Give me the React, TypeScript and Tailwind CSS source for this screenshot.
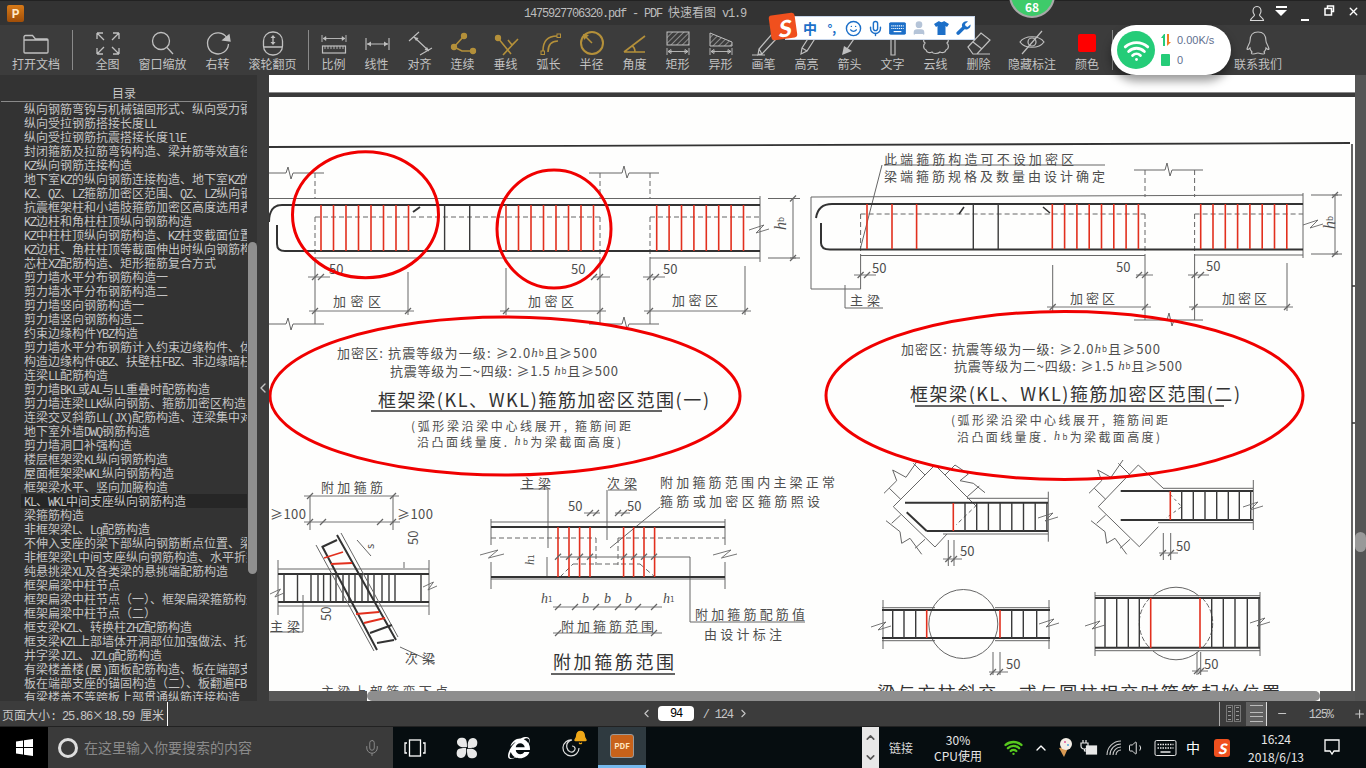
import { FC, ReactNode } from "react";
import { Bell, ChevronDown, ChevronLeft, ChevronRight, ChevronUp, Mic, Minus, Plus, Search, Smile, User, Volume1, Wifi, X } from "lucide-react";
import { FaInternetExplorer } from "react-icons/fa";

// latin runs squeezed to 6px per char, like the bitmap font of the app
const Mixed: FC<{ text: string }> = ({ text }) => (
  <>
    {text.split(/([\x20-\x7e]+)/).map((part, i) =>
      i % 2 ? (
        <span key={i} className="font-['Liberation_Mono'] text-[12px] tracking-[-1.2px] whitespace-pre">
          {part}
        </span>
      ) : (
        part
      ),
    )}
  </>
);

const toc = [
  "纵向钢筋弯钩与机械锚固形式、纵向受力钢筋",
  "纵向受拉钢筋搭接长度LL",
  "纵向受拉钢筋抗震搭接长度llE",
  "封闭箍筋及拉筋弯钩构造、梁并筋等效直径",
  "KZ纵向钢筋连接构造",
  "地下室KZ的纵向钢筋连接构造、地下室KZ的",
  "KZ、QZ、LZ箍筋加密区范围、QZ、LZ纵向钢筋",
  "抗震框架柱和小墙肢箍筋加密区高度选用表",
  "KZ边柱和角柱柱顶纵向钢筋构造",
  "KZ中柱柱顶纵向钢筋构造、KZ柱变截面位置",
  "KZ边柱、角柱柱顶等截面伸出时纵向钢筋构造",
  "芯柱XZ配筋构造、矩形箍筋复合方式",
  "剪力墙水平分布钢筋构造一",
  "剪力墙水平分布钢筋构造二",
  "剪力墙竖向钢筋构造一",
  "剪力墙竖向钢筋构造二",
  "约束边缘构件YBZ构造",
  "剪力墙水平分布钢筋计入约束边缘构件、体积",
  "构造边缘构件GBZ、扶壁柱FBZ、非边缘暗柱",
  "连梁LL配筋构造",
  "剪力墙BKL或AL与LL重叠时配筋构造",
  "剪力墙连梁LLK纵向钢筋、箍筋加密区构造",
  "连梁交叉斜筋LL(JX)配筋构造、连梁集中对角",
  "地下室外墙DWQ钢筋构造",
  "剪力墙洞口补强构造",
  "楼层框架梁KL纵向钢筋构造",
  "屋面框架梁WKL纵向钢筋构造",
  "框架梁水平、竖向加腋构造",
  "KL、WKL中间支座纵向钢筋构造",
  "梁箍筋构造",
  "非框架梁L、Lg配筋构造",
  "不伸入支座的梁下部纵向钢筋断点位置、梁",
  "非框架梁L中间支座纵向钢筋构造、水平折梁",
  "纯悬挑梁XL及各类梁的悬挑端配筋构造",
  "框架扁梁中柱节点",
  "框架扁梁中柱节点（一）、框架扁梁箍筋构造",
  "框架扁梁中柱节点（二）",
  "框支梁KZL、转换柱ZHZ配筋构造",
  "框支梁KZL上部墙体开洞部位加强做法、托柱",
  "井字梁JZL、JZLg配筋构造",
  "有梁楼盖楼(屋)面板配筋构造、板在端部支座",
  "板在端部支座的锚固构造（二）、板翻遍FB构造",
  "有梁楼盖不等跨板上部贯通纵筋连接构造",
];

const GOLD = "#b4903a";

const Ico: FC<{ children: ReactNode; color?: string }> = ({ children, color = "#c0c0c0" }) => (
  <svg width="36" height="30" viewBox="0 0 36 30" fill="none" stroke={color} strokeWidth="1.300" className="shrink-0">
    {children}
  </svg>
);

const hatch = (
  <defs>
    <pattern id="tool-hatch" width="4" height="4" patternUnits="userSpaceOnUse" patternTransform="rotate(45)">
      <line x1="0" y1="0" x2="0" y2="4" stroke="#c0c0c0" strokeWidth="1.200" />
    </pattern>
  </defs>
);

const dimH = <path d="M7 21v7M29 21v7M8 24.500h20M8 24.500l3-2v4zM28 24.500l-3-2v4z" strokeWidth="0.900" />;

const tools: { label: string; w: string; icon: ReactNode; gap?: string }[] = [
  { label: "全图", w: "w-[55px]", gap: "ml-[7px]", icon: <Ico><path d="M7 6l7 7M7 6h6M7 6v6M29 6l-7 7M29 6h-6M29 6v6M7 27l7-7M7 27h6M7 27v-6M29 27l-7-7M29 27h-6M29 27v-6" /></Ico> },
  { label: "窗口缩放", w: "w-[55px]", icon: <Ico><circle cx="16" cy="14" r="8.500" /><path d="M22 20.500l6 6.500" /></Ico> },
  { label: "右转", w: "w-[55px]", icon: <Ico><path d="M27 11A10.500 10.500 0 1 0 28.500 17" /><path d="M23 13l6-5 1 6z" fill="#c0c0c0" /></Ico> },
  { label: "滚轮翻页", w: "w-[55px]", icon: <Ico><rect x="8.500" y="5" width="19" height="23" rx="9" /><path d="M9 20h18M18 10v6" /><path d="M15.500 11l2.500-3 2.500 3zM15.500 15l2.500 3 2.500-3z" fill="#c0c0c0" stroke="none" /></Ico> },
  { label: "比例", w: "w-[43px]", gap: "ml-[3px]", icon: <Ico><path d="M6 8v7M30 8v7M7 11.500h22" strokeWidth="0.900" /><path d="M7 11.500l3-2v4zM29 11.500l-3-2v4z" fill="#c0c0c0" strokeWidth="0.500" /><rect x="6.500" y="19" width="23" height="7" strokeWidth="1.200" /><path d="M9 19v3M12 19v3M15 19v3M18 19v3M21 19v3M24 19v3M27 19v3" strokeWidth="0.900" /></Ico> },
  { label: "线性", w: "w-[43px]", icon: <Ico><path d="M7 11v12M30 11v12M8 17h21" strokeWidth="1.100" /><path d="M8 17l4-2.500v5zM29 17l-4-2.500v5z" fill="#c0c0c0" stroke="none" /></Ico> },
  { label: "对齐", w: "w-[43px]", icon: <Ico><path d="M7 14L17 5M18 28l12-7M12 10l15 14" strokeWidth="1.100" /><path d="M12 10l4.500 1-2.500 3zM27 24l-4.500-1 2.500-3z" fill="#c0c0c0" stroke="none" /></Ico> },
  { label: "连续", w: "w-[43px]", icon: <Ico color={GOLD}><path d="M19 9L9 20l8 4h11" strokeWidth="1.600" /><g fill={GOLD}><circle cx="19" cy="9" r="2.500" /><circle cx="9" cy="20" r="2.500" /><circle cx="28" cy="24" r="2.500" /></g></Ico> },
  { label: "垂线", w: "w-[43px]", icon: <Ico color={GOLD}><path d="M10 11l13 16M30 12L15 28M20 13l4 5 3-3" strokeWidth="1.600" /><circle cx="10" cy="11" r="2.500" fill={GOLD} /></Ico> },
  { label: "弧长", w: "w-[43px]", icon: <Ico color={GOLD}><path d="M12 24C12 14 17 9 26 9M17 25C17 18 20 14 27 14" strokeWidth="1.600" /><rect x="10" y="24" width="3.500" height="3.500" strokeWidth="1" /><rect x="26" y="7" width="3.500" height="3.500" strokeWidth="1" /></Ico> },
  { label: "半径", w: "w-[43px]", icon: <Ico color={GOLD}><circle cx="18" cy="16" r="11" strokeWidth="2" /><path d="M18 16l-7-7" strokeWidth="1.500" /><path d="M9 7l6 1-5 5z" fill={GOLD} stroke="none" /></Ico> },
  { label: "角度", w: "w-[43px]", icon: <Ico color={GOLD}><path d="M7 25L28 9M7 25h21M15 19c2 1 3 3 3 6" strokeWidth="1.600" /></Ico> },
  { label: "矩形", w: "w-[43px]", icon: <Ico>{hatch}<rect x="7" y="5" width="22" height="13" fill="url(#tool-hatch)" strokeWidth="1" />{dimH}</Ico> },
  { label: "异形", w: "w-[43px]", icon: <Ico><path d="M7 6L29 15V19H7Z" fill="url(#tool-hatch)" strokeWidth="1" />{dimH}</Ico> },
  { label: "画笔", w: "w-[43px]", icon: <Ico><path d="M6 28h13M14 27l-2 1 1-6L26 7l5 4-15 16zM13 22l3 5" strokeWidth="1.200" /></Ico> },
  { label: "高亮", w: "w-[43px]", icon: <Ico><path d="M12 27l1-6 9-14 5 3-9 14zM13 21l5 3" strokeWidth="1.200" /></Ico> },
  { label: "箭头", w: "w-[43px]", icon: <Ico><path d="M24 9L15 22" strokeWidth="1.300" /><path d="M10 28l2-9 8 5z" fill="#c0c0c0" stroke="none" /></Ico> },
  { label: "文字", w: "w-[43px]", icon: <Ico><path d="M7 12V7h22v5M16 7v21h4V7" strokeWidth="1.200" /></Ico> },
  { label: "云线", w: "w-[43px]", icon: <Ico><path d="M8 10c-3 1-3 5-1 6-2 2-2 6 1 7 1 3 4 3 6 2 1 2 6 2 8 0 2 1 5 1 6-2 3-1 3-5 1-7 2-2 2-5-1-6" strokeWidth="1.200" /></Ico> },
  { label: "删除", w: "w-[43px]", icon: <Ico><path d="M7 20L20 6l9 7-13 14h-4zM12 15l9 7M12 27h17" strokeWidth="1.200" /></Ico> },
  { label: "隐藏标注", w: "w-[64px]", icon: <Ico><path d="M6 15C11 8 25 8 30 15C25 22 11 22 6 15Z" strokeWidth="1.200" /><circle cx="18" cy="15" r="4" strokeWidth="1.200" /><path d="M8 27L28 4" strokeWidth="1.200" /></Ico> },
  { label: "颜色", w: "w-[46px]", icon: <Ico><rect x="9" y="7" width="18" height="18" rx="2" fill="#ff0000" stroke="none" /></Ico> },
];

const Tool: FC<{ label: string; w: string; icon: ReactNode; gap?: string }> = ({ label, w, icon, gap = "" }) => (
  <div className={`flex shrink-0 flex-col items-center pt-[2px] ${w} ${gap}`}>
    {icon}
    <span className="h-[14px] whitespace-nowrap text-[12px] leading-[14px] text-[#c2c2c2]">{label}</span>
  </div>
);

const TitleBar: FC = () => (
  <div className="flex h-[25px] shrink-0 items-center border-t border-[#222] bg-[#333]">
    <div className="ml-[7px] flex h-[17px] w-[17px] items-center justify-center rounded-[2px] bg-gradient-to-b from-[#d87a18] to-[#a04e08] text-[12px] font-bold leading-none text-[#ffe9c8]">
      P
    </div>
    <div className="ml-[500px] whitespace-nowrap text-[12px] text-[#bdbdbd]">
      <Mixed text="1475927706320.pdf - PDF 快速看图 v1.9" />
    </div>
    <div className="ml-auto mr-px flex text-white">
      <div className="flex w-[24px] justify-center">
        <svg width="16" height="17" viewBox="0 0 16 17" fill="none" stroke="#d8d8d8" strokeWidth="1.100">
          <path d="M8 1.500c-3 0-4 2.500-4 4.500 0 2 1 3 1.500 4C5.500 11.500 2 12.500 1.500 15.500h13C14 12.500 10.500 11.500 10.500 10 11 9 12 8 12 6c0-2-1-4.500-4-4.500z" />
        </svg>
      </div>
      <div className="flex w-[24px] flex-col items-center gap-[2px] pt-[1px]">
        <div className="h-[2px] w-[11px] bg-white" />
        <div className="h-0 w-0 border-x-[6px] border-t-[6px] border-x-transparent border-t-white" />
      </div>
      <div className="flex w-[24px] items-end justify-center pb-[1px]">
        <div className="h-[2px] w-[8px] bg-white" />
      </div>
      <div className="flex w-[24px] justify-center">
        <svg width="11" height="11" viewBox="0 0 11 11" fill="none" stroke="#fff" strokeWidth="1.500">
          <path d="M3.500 3V1h6v5.500H7.500M1 3.500h6.500V10H1z" />
        </svg>
      </div>
      <div className="flex w-[24px] justify-center">
        <X size={13} strokeWidth={2.500} />
      </div>
    </div>
  </div>
);

const Divider: FC<{ gap: string }> = ({ gap }) => <div className={`h-[40px] w-px shrink-0 self-center bg-[#8a8a8a] ${gap}`} />;

const Toolbar: FC = () => (
  <div className="flex h-[50px] shrink-0 bg-[#3c3c3c]">
    <Tool
      label="打开文档"
      w="w-[72px]"
      icon={
        <Ico>
          <path d="M6 10a1.500 1.500 0 0 1 1.500-1.500h7l3 3.500H29a1 1 0 0 1 1 1v12a1 1 0 0 1-1 1H7a1 1 0 0 1-1-1zM6 13h24" />
        </Ico>
      }
    />
    <Divider gap="" />
    {tools.slice(0, 4).map((t) => (
      <Tool key={t.label} {...t} />
    ))}
    <Divider gap="ml-[8px]" />
    {tools.slice(4).map((t) => (
      <Tool key={t.label} {...t} />
    ))}
    <Divider gap="ml-[2px]" />
    <Tool
      label="联系我们"
      w="w-[64px]"
      gap="ml-[113px]"
      icon={
        <Ico>
          <path d="M18 5c-6 0-8 4-8 9 0 2-2 4-3 8 1 1 2 0 3-1 0 2 1 3 2 4-1 1-1 2 1 2 3 0 4-1 5-1s2 1 5 1c2 0 2-1 1-2 1-1 2-2 2-4 1 1 2 2 3 1-1-4-3-6-3-8 0-5-2-9-8-9z" strokeWidth="1.100" />
        </Ico>
      }
    />
  </div>
);

const Sidebar: FC = () => (
  <div className="flex w-[257px] shrink-0 bg-[#333]">
    <div className="flex w-[248px] flex-col overflow-hidden">
      <div className="ml-px h-[27px] w-[246px] shrink-0 border-b border-[#8a8a8a] text-center text-[12px] leading-[36px] text-[#c6c6c6]">目录</div>
      {toc.map((line, i) => (
        <div
          key={i}
          className={`ml-[21px] h-[14px] w-[226px] shrink-0 overflow-hidden whitespace-nowrap pl-[3px] text-[12px] leading-[14px] text-[#c4c4c4] ${line.startsWith("KL、WKL") ? "bg-[#262626]" : ""}`}
        >
          <Mixed text={line} />
        </div>
      ))}
    </div>
    <div className="w-[9px]">
      <div className="mt-[167px] h-[332px] rounded-full bg-[#8f8f8f]" />
    </div>
  </div>
);

// ---- scanned drawing ----
const seq = (start: number, step: number, n: number) => Array.from({ length: n }, (_, i) => start + i * step);

const T: FC<{ x: number; y: number; w?: number; s?: number; children: ReactNode; rot?: boolean; c?: string }> = ({ x, y, w, s = 13, children, rot, c = "#4e4e4e" }) => (
  <text
    x={x}
    y={y}
    fontSize={s}
    fill={c}
    stroke="none"
    dominantBaseline="central"
    textLength={w}
    lengthAdjust={w ? "spacing" : undefined}
    transform={rot ? `rotate(-90 ${x} ${y})` : undefined}
  >
    {children}
  </text>
);

const Bars: FC<{ xs: number[]; y1: number; y2: number; red?: boolean }> = ({ xs, y1, y2, red }) => (
  <g stroke={red ? "#e2301e" : "#3a3a3a"} strokeWidth={red ? 1.600 : 1.400}>
    {xs.map((x) => (
      <line key={x} x1={x} x2={x} y1={y1} y2={y2} />
    ))}
  </g>
);

const Dim: FC<{ y: number; x1: number; x2: number; ticks: number[] }> = ({ y, x1, x2, ticks }) => (
  <g stroke="#666" strokeWidth="0.900">
    <line x1={x1} x2={x2} y1={y} y2={y} />
    {ticks.map((x) => (
      <line key={x} x1={x - 3} x2={x + 3} y1={y + 3} y2={y - 3} strokeWidth="1.300" />
    ))}
  </g>
);

const Zig: FC<{ x: number; y: number; w?: number }> = ({ x, y, w = 20 }) => (
  <path d={`M${x} ${y + 2}L${x + w * 0.75} ${y - 3}L${x + w * 0.35} ${y + 5}L${x + w} ${y + 1}`} stroke="#666" strokeWidth="0.900" fill="none" />
);

const Hb: FC<{ sub?: string }> = ({ sub = "b" }) => (
  <>
    <tspan fontStyle="italic" fontFamily="Liberation Serif">h</tspan>
    <tspan fontSize="8">{sub}</tspan>
  </>
);

// the two column stubs on the left sides of the skew beams
const stubsLeft = "M889.300 488.300L900.700 499.300M913.300 463.300L925 475M884 493.300L896.700 480.700L892.700 470L906 477.300L918 460M900.700 515L891.700 523.300M925 539.300L915 548.300M886 520.700L900 531.700L901.700 543.300L910 538.300L921.700 554.300";

const Drawing: FC = () => (
  <svg width="1086" height="604" viewBox="269 97 1086 604" className="block font-['Noto_Sans_CJK_SC',sans-serif]">
    <rect x="269" y="97" width="1086" height="604" fill="#fefefd" />
    <g fill="none" stroke="#666" strokeWidth="1">
      <path d="M269 147L1350 143" stroke="#333" strokeWidth="1.800" />
      <path d="M1352 144V701M1352 286H1355M1352 423H1355" stroke="#333" strokeWidth="1.500" />

      {/* beam one */}
      <path d="M269 198.500H760M315 258H600M650 258H760M760 196V262" />
      <path d="M269 173H286l2-6 3 12 2-6H324M269 324H286l2-6 3 12 2-6H324M589 173H622l2-7 3 12 2-5H659M589 324H622l2-7 3 12 2-5H659" />
      <path d="M315 258V324M600 258V324M650 258V324M408 272V315M506 268V315M745 266V315" />
      <path d="M315 173V198M600 173V198M650 173V198M315 217H600M650 217H760M315 217V258M600 217V258M650 217V258" strokeDasharray="5 3" />
      <path d="M269 222Q269 205 282 205H760M277 225V244Q277 251 285 251H760" stroke="#333" strokeWidth="2" />
      <path d="M413 212L420 207" stroke="#333" strokeWidth="2" />
      <Zig x={749} y={228} />
      <path d="M768 198.500H800M768 258H800M793 198V258" />
      <Dim y={198.500} x1={790} x2={796} ticks={[793]} />
      <Dim y={258} x1={790} x2={796} ticks={[793]} />
      <Bars xs={[444.600, 469.700]} y1={205} y2={251} />
      <Bars xs={seq(321, 12.500, 8)} y1={205} y2={251} red />
      <Bars xs={seq(506, 12.500, 8)} y1={205} y2={251} red />
      <Bars xs={seq(656.700, 12.400, 8)} y1={205} y2={251} red />
      <Dim y={277} x1={308} x2={330} ticks={[315, 321]} />
      <Dim y={277} x1={593} x2={610} ticks={[594, 600]} />
      <Dim y={277} x1={643} x2={665} ticks={[650, 656]} />
      <Dim y={311} x1={309} x2={414} ticks={[315, 408]} />
      <Dim y={311} x1={500} x2={606} ticks={[506, 600]} />
      <Dim y={311} x1={644} x2={751} ticks={[650, 745]} />

      {/* beam two */}
      <path d="M811 197L1303 195M811 197V289H860.600M860.600 255V289M860.600 255.500H1145M1194.600 255H1303M1303 193V258" />
      <path d="M1134 170H1165l2-7 3 13 2-6H1203M1134 320H1167l2-7 3 13 2-6H1203M1145 255V320M1194.600 255V320M1052.700 265V311M1287 263V311" />
      <path d="M884 165H1105M882 165L860 250M845 285V308H883" />
      <path d="M1145 170V197M1194.600 170V197M860.600 214H1145M1194.600 214H1303M860.600 214V255M1145 214V255M1194.600 214V255" strokeDasharray="5 3" />
      <path d="M816 218Q818 204 832 204H1303M821 223V243Q821 249.500 830 249.500H1303" stroke="#333" strokeWidth="2" />
      <path d="M959 214L964 207M1043 207L1050 213" stroke="#333" strokeWidth="1.600" />
      <Zig x={1303} y={223} />
      <path d="M1311 195H1342M1311 254H1342M1335 195V254" />
      <Dim y={195} x1={1332} x2={1338} ticks={[1335]} />
      <Dim y={254} x1={1332} x2={1338} ticks={[1335]} />
      <Bars xs={[973.300, 998.200]} y1={204} y2={249} />
      <Bars xs={[867, 892, 916.600]} y1={204} y2={249} red />
      <Bars xs={seq(1052.300, 12.300, 8)} y1={204} y2={249} red />
      <Bars xs={seq(1200.700, 12.300, 8)} y1={204} y2={249} red />
      <Dim y={275} x1={854} x2={876} ticks={[860.600, 867]} />
      <Dim y={275} x1={1136} x2={1153} ticks={[1139, 1145]} />
      <Dim y={275} x1={1188} x2={1209} ticks={[1194.600, 1201]} />
      <Dim y={307} x1={1047} x2={1151} ticks={[1052.700, 1145]} />
      <Dim y={307} x1={1189} x2={1293} ticks={[1194.600, 1287]} />

      {/* 附加箍筋 left */}
      <path d="M310 496V530M393 496V530M278 569H429M278 606H429M278 560V615M429 560V615M303 595V632H270M400 647L435 663" />
      <Dim y={496} x1={304} x2={399} ticks={[310, 393]} />
      <Dim y={522} x1={304} x2={400} ticks={[310, 323, 380, 393]} />
      <path d="M278 574H429M278 602H429" stroke="#333" strokeWidth="2" />
      <Bars xs={[284, 297.500, 311, 318, 323.600, 330.500, 336, 343, 349, 355, 362, 368, 374, 382, 389, 395, 421]} y1={574} y2={602} />
      <path d="M316 545L374 651M341 533L398 637" />
      <path d="M322 546L377 650M337 535L396 640M322 547L337 540M370 633L392 625M377 643L394 640" stroke="#333" strokeWidth="2" />
      <path d="M324 558L343 552M331 564L352 563M356 614L379 612M364 623L385 618" stroke="#e2301e" strokeWidth="1.800" />
      <Zig x={270} y={592} w={14} />
      <Zig x={423} y={585} w={14} />
      <path d="M357 540L371 556M404 562V568" />

      {/* 附加箍筋 middle */}
      <path d="M520 489H548V548M608 490H637M607 490V540M660 507L610 548M491 522H725M491 579H725M491 519V545M491 562V589M725 519V545M725 562V589M547 557V578M560 557H690V622H805" />
      <path d="M491 538H596M618 538H725M596 538V565M618 538V565M573 564H640M560 577L573 564M640 564L655 577" strokeDasharray="5 3" />
      <path d="M491 527H725M491 577H725" stroke="#333" strokeWidth="2" />
      <Zig x={480} y={553} w={24} />
      <Zig x={713} y={553} w={24} />
      <Bars xs={[558, 569, 579.600, 590, 623.600, 633.600, 644, 654.600]} y1={527} y2={577} red />
      <Dim y={513} x1={584} x2={600} ticks={[590, 596]} />
      <Dim y={513} x1={615} x2={630} ticks={[618, 624]} />
      <Dim y={556.700} x1={558} x2={558} ticks={[558, 569, 580, 590, 624, 634, 644, 654]} />
      <Dim y={607} x1={553} x2={662} ticks={[558, 575, 596, 618, 638, 654]} />
      <Dim y={633} x1={553} x2={662} ticks={[558, 654]} />

      {/* 斜交 */}
      <path d="M947 534L935 547L893.300 506.700L935 465L976.700 506.700M967 498.300H1048M943 534H1048M1048.300 491.700V541.700" />
      <path d="M976.700 505L956 525" strokeDasharray="4 3" />
      <path d={stubsLeft} />
      <path d="M945 475L955 465M967.300 496.700L979.300 486M955 465L968.300 474L960 480.700L973.300 483.300L985 492.700" />
      <path d="M905 502.700H1048M926.700 531H1048M906.700 512.300L926.700 531" stroke="#333" strokeWidth="2" />
      <Bars xs={seq(965, 11.700, 8)} y1={503} y2={531} />
      <Bars xs={[953.300]} y1={503} y2={531} red />
      <Zig x={1038} y={516} />
      <path d="M948.300 540V566M954 540V566" />
      <Dim y={559} x1={943} x2={962} ticks={[948.300, 954]} />

      <path d="M1163.300 488.300L1138.300 465L1098.300 506.700L1139.300 546.700L1158.300 526.700M1163 488.300H1253M1158 522.700H1253M1253.300 480V530" />
      <path d="M1166 490L1181.700 506.700L1166 518" strokeDasharray="3 3" />
      <g transform="translate(205 0)">
        <path d={stubsLeft} />
      </g>
      <path d="M1120.700 491H1253M1120.700 520H1253" stroke="#333" strokeWidth="2" />
      <Bars xs={[1181.700, 1193.300, 1205, 1216.700, 1228.300, 1239.300, 1250.700]} y1={491} y2={520} />
      <Bars xs={[1170.300]} y1={491} y2={520} red />
      <Zig x={1243} y={505} />
      <path d="M1163.300 533V560M1170.700 533V560" />
      <Dim y={553} x1={1159} x2={1178} ticks={[1163, 1171]} />

      {/* 圆柱 */}
      <circle cx="963.300" cy="624" r="34.500" />
      <path d="M882 607.700H935M995 607.700H1050M882 640.700H935M995 640.700H1050M883 600V649M1049 600V649" />
      <path d="M882 610H1050M882 638H1050" stroke="#333" strokeWidth="2" />
      <Bars xs={[892.700, 904, 915.700, 1011.700, 1023.300, 1036.700]} y1={610} y2={638} />
      <Bars xs={[926.700, 1000]} y1={610} y2={638} red />
      <Zig x={871} y={625} />
      <Zig x={1039} y={622} />
      <path d="M993 652V675M1000 652V675" />
      <Dim y={672} x1={989} x2={1008} ticks={[993, 1000]} />

      <path d="M1153 596A34.500 34.500 0 0 1 1199 596M1153 651A34.500 34.500 0 0 0 1199 651" />
      <path d="M1150 598A34.500 34.500 0 0 0 1150 648M1202 598A34.500 34.500 0 0 1 1202 648" strokeDasharray="5 2" />
      <path d="M1095 595.700H1260M1095 650.700H1260M1095 592V656M1260 592V656" />
      <path d="M1095 598H1260M1095 647.700H1260" stroke="#333" strokeWidth="2" />
      <Bars xs={[1105, 1116.700, 1128.300, 1139.300, 1211.700, 1223.300, 1235, 1247.300, 1259]} y1={598} y2={648} />
      <Bars xs={[1150.700, 1200]} y1={598} y2={648} red />
      <Zig x={1085} y={624} />
      <Zig x={1250} y={621} />
      <path d="M1197 652V675M1200.700 652V675" />
      <Dim y={671} x1={1192} x2={1208} ticks={[1197, 1201]} />
      <path d="M371 411H662M915 406H1224M551 674H675" stroke="#333" strokeWidth="1.500" />
    </g>

    {/* drawing labels */}
    <T x={329} y={268}>50</T>
    <T x={571} y={268}>50</T>
    <T x={663} y={268}>50</T>
    <T x={333} y={300} w={48}>加密区</T>
    <T x={528} y={300} w={46}>加密区</T>
    <T x={672} y={299} w={46}>加密区</T>
    <T x={337} y={352} w={260}>加密区: 抗震等级为一级: ≥2.0<Hb />且≥500</T>
    <T x={390} y={370} w={228}>抗震等级为二~四级: ≥1.5 <Hb />且≥500</T>
    <T x={378} y={399} w={331} s={18} c="#333">框架梁(KL、WKL)箍筋加密区范围(一)</T>
    <T x={411} y={425} w={220} s={12}>(弧形梁沿梁中心线展开, 箍筋间距</T>
    <T x={417} y={441} w={204} s={12}>沿凸面线量度. <Hb />为梁截面高度)</T>
    <T x={780} y={230} rot s={16}><Hb /></T>

    <T x={884} y={158} w={190}>此端箍筋构造可不设加密区</T>
    <T x={884} y={175} w={221}>梁端箍筋规格及数量由设计确定</T>
    <T x={850} y={299} w={30}>主梁</T>
    <T x={872} y={267}>50</T>
    <T x={1116} y={266}>50</T>
    <T x={1206} y={265}>50</T>
    <T x={1070} y={297} w={45}>加密区</T>
    <T x={1222} y={297} w={45}>加密区</T>
    <T x={901} y={348} w={259}>加密区: 抗震等级为一级: ≥2.0<Hb />且≥500</T>
    <T x={954} y={365} w={228}>抗震等级为二~四级: ≥1.5 <Hb />且≥500</T>
    <T x={910} y={393} w={330} s={18} c="#333">框架梁(KL、WKL)箍筋加密区范围(二)</T>
    <T x={951} y={419} w={217} s={12}>(弧形梁沿梁中心线展开, 箍筋间距</T>
    <T x={957} y={436} w={203} s={12}>沿凸面线量度. <Hb />为梁截面高度)</T>
    <T x={1329} y={229} rot s={16}><Hb /></T>

    <T x={321} y={486} w={62}>附加箍筋</T>
    <T x={270} y={513} w={36}>≥100</T>
    <T x={397} y={513} w={36}>≥100</T>
    <T x={412} y={545} rot>50</T>
    <T x={325} y={621} rot>50</T>
    <T x={369} y={549} rot s={11}>s</T>
    <T x={270} y={625} w={30}>主梁</T>
    <T x={405} y={657} w={30}>次梁</T>
    <T x={321} y={690} w={127}>主梁上部筋弯下点</T>

    <T x={521} y={482} w={30}>主梁</T>
    <T x={607} y={482} w={30}>次梁</T>
    <T x={660} y={481} w={175}>附加箍筋范围内主梁正常</T>
    <T x={660} y={500} w={160}>箍筋或加密区箍筋照设</T>
    <T x={568} y={505}>50</T>
    <T x={627} y={505}>50</T>
    <T x={530} y={565} rot s={12}><Hb sub="1" /></T>
    <T x={541} y={598} s={14}><Hb sub="1" /></T>
    <T x={582} y={598} s={14}><tspan fontStyle="italic" fontFamily="Liberation Serif">b</tspan></T>
    <T x={604} y={598} s={14}><tspan fontStyle="italic" fontFamily="Liberation Serif">b</tspan></T>
    <T x={625} y={598} s={14}><tspan fontStyle="italic" fontFamily="Liberation Serif">b</tspan></T>
    <T x={663} y={598} s={14}><Hb sub="1" /></T>
    <T x={561} y={625} w={93}>附加箍筋范围</T>
    <T x={695} y={613} w={110}>附加箍筋配筋值</T>
    <T x={704} y={633} w={78}>由设计标注</T>
    <T x={553} y={661} w={121} s={18} c="#333">附加箍筋范围</T>

    <T x={960} y={550}>50</T>
    <T x={1176} y={545}>50</T>
    <T x={1006} y={663}>50</T>
    <T x={1204} y={663}>50</T>
    <T x={877} y={692} w={403} s={18} c="#333">梁与方柱斜交，或与圆柱相交时箍筋起始位置</T>

    {/* hand marked red rings */}
    <g fill="none" stroke="#f00000" strokeWidth="3">
      <ellipse cx="365.500" cy="214.700" rx="73" ry="63" />
      <ellipse cx="554" cy="229" rx="57" ry="59" />
      <ellipse cx="505" cy="396" rx="235" ry="79" />
      <ellipse cx="1064.500" cy="395.500" rx="238.500" ry="84" />
    </g>
  </svg>
);

const PageArea: FC = () => (
  <div className="flex flex-1 flex-col overflow-hidden bg-[#3f3f3f]">
    <div className="h-[17px] shrink-0 bg-white" />
    <div className="h-[5px] shrink-0 border-t border-[#8a8a8a] bg-[#3a3a3a]" />
    <div className="relative flex-1">
      <Drawing />
      <div className="absolute inset-x-0 bottom-0 flex h-[10px]">
        <div className="w-[98px] bg-[#585858]" />
        <div className="flex-1 rounded-l-full rounded-r-full bg-[#8e8e8e]" />
        <div className="w-[35px] bg-[#585858]" />
      </div>
    </div>
  </div>
);

const StatusBar: FC = () => (
  <div className="flex h-[26px] shrink-0 items-center border-b border-[#222] bg-[#3c3c3c] text-[12px] text-[#c6c6c6]">
    <div className="ml-[2px] h-[24px] w-[166px] shrink-0 whitespace-nowrap border-r border-white leading-[26px]">
      <Mixed text="页面大小: 25.86" />×<Mixed text="18.59 " />厘米
    </div>
    <ChevronLeft size={13} className="ml-[472px] shrink-0" />
    <div className="ml-[5px] flex h-[15px] w-[38px] items-center justify-center rounded-[4px] bg-white text-black">
      <Mixed text="94" />
    </div>
    <div className="ml-[9px] w-[34px]">
      <Mixed text="/ 124" />
    </div>
    <ChevronRight size={13} className="ml-[2px] shrink-0" />
    <div className="ml-[469px] h-[24px] w-px shrink-0 bg-[#aaa]" />
    <div className="ml-[6px] flex gap-[1px]">
      {[0, 1].map((i) => (
        <div key={i} className="flex h-[17px] w-[7px] flex-col justify-between border border-[#777] p-px">
          <div className="h-px bg-[#999]" />
          <div className="h-px bg-[#999]" />
          <div className="h-px bg-[#999]" />
          <div className="h-px bg-[#999]" />
        </div>
      ))}
    </div>
    <div className="ml-[5px] flex h-[24px] w-[22px] flex-col items-center justify-center gap-[3px] bg-[#606060]">
      <div className="h-[8px] w-[13px] border-y border-[#bbb]" />
      <div className="h-[6px] w-[13px] border-y border-[#bbb]" />
    </div>
    <div className="h-[24px] w-px shrink-0 bg-[#ddd]" />
    <Minus size={13} className="ml-[9px]" />
    <div className="ml-[17px] w-[32px] text-center">
      <Mixed text="125%" />
    </div>
    <Plus size={14} className="ml-[17px]" />
  </div>
);

const KeyboardIcon: FC<{ w: number; h: number; body: string; keys: string; outline?: boolean }> = ({ w, h, body, keys, outline }) => (
  <svg width={w} height={h} viewBox="0 0 22 16" className="shrink-0">
    <rect x="0.500" y="0.500" width="21" height="15" rx="1.500" fill={outline ? "none" : body} stroke={body} />
    <path d="M3 4.500h16M3 8h16" stroke={keys} strokeWidth="1.500" strokeDasharray="1.500 1" />
    <path d="M6 12h10" stroke={keys} strokeWidth="1.500" />
  </svg>
);

const tray: { w: string; node: ReactNode }[] = [
  { w: "w-[40px]", node: <Wifi size={19} strokeWidth={3} className="text-[#57c81e]" /> },
  { w: "w-[16px]", node: <ChevronUp size={16} className="text-white" /> },
  {
    w: "w-[32px]",
    node: (
      <svg width="18" height="20" viewBox="0 0 18 20">
        <path d="M3 10L8 19L13 8Z" fill="#d99a54" />
        <circle cx="10" cy="6" r="6" fill="#f3eee6" />
        <circle cx="9" cy="4" r="1" fill="#e0539a" />
        <circle cx="12" cy="7" r="1" fill="#4fa7e0" />
      </svg>
    ),
  },
  {
    w: "w-[16px]",
    node: (
      <svg width="18" height="16" viewBox="0 0 18 16" fill="none" stroke="#e8e8e8" strokeWidth="1.200" className="shrink-0">
        <path d="M3 0v3M6 0v3M1 3h7v3a3 3 0 0 1-3 3H4a3 3 0 0 1-3-3z" />
        <path d="M4.500 9v2h2" />
        <rect x="6.500" y="6" width="10" height="8" fill="#e8e8e8" />
      </svg>
    ),
  },
  {
    w: "w-[34px]",
    node: (
      <svg width="16" height="16" viewBox="0 0 16 16" fill="none" stroke="#c8c8c8" strokeWidth="1.100">
        <path d="M1 15A14 14 0 0 1 15 1M4 15A11 11 0 0 1 15 4M7 15A8 8 0 0 1 15 7M10 15A5 5 0 0 1 15 10" />
      </svg>
    ),
  },
  { w: "w-[12px]", node: <Volume1 size={18} strokeWidth={1.300} className="shrink-0 text-[#e8e8e8]" /> },
  { w: "w-[44px]", node: <KeyboardIcon w={23} h={16} body="#e8e8e8" keys="#e8e8e8" outline /> },
  { w: "w-[12px]", node: <span className="shrink-0 text-[14px] text-white">中</span> },
  {
    w: "w-[46px]",
    node: <span className="flex h-[18px] w-[16px] items-center justify-center rounded-[3px] bg-[#f0501e] text-[14px] font-bold italic leading-none text-white">S</span>,
  },
];

const Taskbar: FC = () => (
  <div className="flex h-[41px] shrink-0 items-center bg-[#060d10] text-white">
    <div className="flex h-full w-[48px] items-center justify-center bg-black">
      <svg width="17" height="17" viewBox="0 0 17 17" fill="#fff">
        <path d="M0 2.500L7 1.500V8H0zM8 1.300L17 0V8H8zM0 9H7V15.500L0 14.500zM8 9H17V17L8 15.700z" />
      </svg>
    </div>
    <div className="flex h-full w-[345px] items-center bg-[#3a3a3a]">
      <div className="ml-[10px] h-[20px] w-[20px] rounded-full border-[3px] border-[#ddd]" />
      <span className="ml-[6px] text-[14px] text-[#8a8a8a]">在这里输入你要搜索的内容</span>
      <Mic size={18} strokeWidth={1.300} className="ml-[111px] text-[#8a8a8a]" />
    </div>
    <div className="flex w-[44px] justify-center">
      <svg width="22" height="18" viewBox="0 0 22 18" fill="none" stroke="#fff" strokeWidth="1.300">
        <rect x="5.500" y="1" width="11" height="16" />
        <path d="M3 4H1v10h2M19 4h2v10h-2" />
      </svg>
    </div>
    <div className="ml-[4px] flex w-[52px] justify-center">
      <svg width="22" height="22" viewBox="0 0 22 22" fill="#e8e8e8">
        <path d="M11 10C5 11 1 9 1 5S5 0 8 1 11 6 11 10zM12 11C11 5 13 1 17 1S22 5 21 8 16 11 12 11zM11 12C17 11 21 13 21 17S17 22 14 21 11 16 11 12zM10 11C11 17 9 21 5 21S0 17 1 14 6 11 10 11z" />
      </svg>
    </div>
    <div className="flex w-[52px] justify-center">
      <FaInternetExplorer size={22} className="text-white" />
    </div>
    <div className="relative flex w-[52px] justify-center">
      <svg width="18" height="18" viewBox="0 0 18 18" fill="none" stroke="#ddd" strokeWidth="1.200">
        <path d="M17 9A8 8 0 1 1 10 1C6 2 4 5 5 9s5 5 7 3 1-5-2-5" />
      </svg>
      <Bell size={15} fill="#f0a818" className="absolute left-[28px] top-[-9px] text-[#f0a818]" />
    </div>
    <div className="ml-px flex h-full w-[48px] items-center justify-center border-b-[3px] border-[#76b9ed] bg-[#2f3a40]">
      <div className="flex h-[24px] w-[24px] items-center justify-center rounded-[3px] border border-[#999] bg-[#c8621a] text-[8px] font-bold text-[#ffe6c0]">PDF</div>
    </div>
    <div className="flex-1" />
    <div className="flex h-full w-[17px] flex-col items-center justify-between bg-[#e8e8e8] py-[4px] text-[#555]">
      <ChevronUp size={13} strokeWidth={3} />
      <ChevronDown size={13} strokeWidth={3} />
    </div>
    <div className="w-[44px] text-center text-[12px] text-[#d8d8d8]">链接</div>
    <div className="flex w-[70px] flex-col items-center text-[12px] leading-[16px] text-[#e8e8e8]">
      <span>30%</span>
      <span className="whitespace-nowrap">CPU使用</span>
    </div>
    {tray.map((t, i) => (
      <div key={i} className={`flex shrink-0 justify-center ${t.w}`}>
        {t.node}
      </div>
    ))}
    <div className="flex w-[62px] shrink-0 flex-col items-center text-[12px] leading-[18px] text-[#e8e8e8]">
      <span>16:24</span>
      <span className="whitespace-nowrap">2018/6/13</span>
    </div>
    <div className="flex w-[50px] shrink-0 justify-center">
      <svg width="16" height="17" viewBox="0 0 16 17" fill="none" stroke="#fff" strokeWidth="1.300">
        <path d="M1 1h14v11H10l-2 3-2-3H1z" />
      </svg>
    </div>
    <div className="w-[9px]" />
  </div>
);

const sogouItem = "flex w-[22px] justify-center";

const Overlays: FC = () => (
  <>
    <div className="absolute left-[1009px] top-[-28px] flex h-[46px] w-[46px] items-end justify-center rounded-full border-2 border-[#a8a8a8] bg-[#3ecb6a] pb-[3px] text-[12px] font-bold leading-[12px] text-white">
      68
    </div>
    <div className="absolute left-[785px] top-[16px] flex h-[24px] w-[190px] items-center border border-[#c8d6ea] bg-white pl-[13px] text-[#1c6fc8]">
      <div className={`${sogouItem} text-[14px] font-bold`}>中</div>
      <div className={`${sogouItem} text-[12px] font-bold`}>°,</div>
      <div className={sogouItem}>
        <Smile size={17} />
      </div>
      <div className={sogouItem}>
        <Mic size={17} />
      </div>
      <div className={sogouItem}>
        <KeyboardIcon w={17} h={13} body="#1c6fc8" keys="#fff" />
      </div>
      <div className={sogouItem}>
        <User size={16} fill="#b5c4d8" className="text-[#b5c4d8]" />
      </div>
      <div className={sogouItem}>
        <svg width="15" height="14" viewBox="0 0 15 14" fill="#1c6fc8">
          <path d="M5 0C6 1.500 9 1.500 10 0L15 3 13 6 11.500 5V14H3.500V5L2 6 0 3z" />
        </svg>
      </div>
      <div className={sogouItem}>
        <svg width="15" height="15" viewBox="0 0 15 15" fill="#1c6fc8">
          <path d="M14.500 3.500L11.500 6 9.500 5 9 3l3-2.500C9.500-.5 6.500 1 6 3.500c-.2 1 0 1.500.2 2.300L.8 11c-1.500 1.500.8 4 2.500 2.500l5.300-5.200c3 .8 6.500-1.500 5.900-4.800z" />
        </svg>
      </div>
    </div>
    <div className="absolute left-[770px] top-[14px] flex h-[25px] w-[26px] -rotate-[8deg] items-center justify-center rounded-[3px] bg-[#f0501e] text-[22px] font-bold italic leading-none text-white">
      S
    </div>
    <div className="absolute left-[1111px] top-[25px] flex h-[50px] w-[120px] items-center rounded-full bg-white pl-[6px] shadow-[0_6px_10px_rgba(0,0,0,0.4)]">
      <div className="flex h-[38px] w-[38px] items-center justify-center rounded-full bg-[#25cc78]">
        <Wifi size={27} strokeWidth={2.500} className="text-white" />
      </div>
      <div className="ml-[6px] flex flex-col gap-[6px] font-['Liberation_Sans'] text-[11px] leading-[14px] text-[#5f6f8f]">
        <div className="flex items-center gap-[6px]">
          <svg width="10" height="12" viewBox="0 0 10 12">
            <path d="M6 0H8V8H10L6 12z" fill="#f08020" />
            <path d="M2 12V4H0L3 0H4V12z" fill="#25cc78" />
          </svg>
          <span>0.00K/s</span>
        </div>
        <div className="flex items-center gap-[7px]">
          <div className="h-[12px] w-[9px] rounded-[1px] bg-[#25cc78]" />
          <span>0</span>
        </div>
      </div>
    </div>
  </>
);

export default function App() {
  return (
    <div className="relative flex h-[768px] w-[1366px] flex-col overflow-hidden font-['Noto_Sans_CJK_SC',sans-serif]">
      <TitleBar />
      <Toolbar />
      <div className="flex h-[626px] shrink-0">
        <Sidebar />
        <div className="flex w-[12px] shrink-0 items-center justify-center bg-[#3c3c3c] text-[#c6c6c6]">
          <ChevronLeft size={16} className="shrink-0" />
        </div>
        <PageArea />
        <div className="w-[11px] shrink-0 bg-[#555]">
          <div className="mt-[457px] h-[20px] rounded-full bg-[#999]" />
        </div>
      </div>
      <StatusBar />
      <Taskbar />
      <Overlays />
    </div>
  );
}
